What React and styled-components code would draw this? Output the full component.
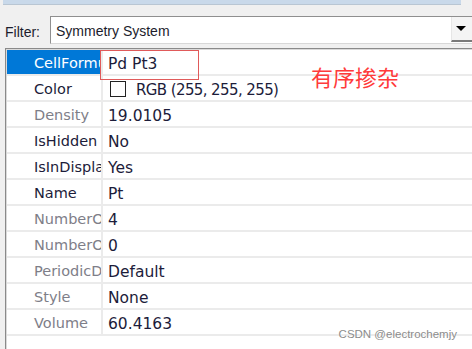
import React from 'react';
import styled, { createGlobalStyle } from 'styled-components';

const GlobalStyle = createGlobalStyle`
  html, body, #root {
    margin: 0;
    height: 100%;
  }
  body {
    background: #f0f0f0;
    overflow: hidden;
    font-family: "DejaVu Sans", Verdana, sans-serif;
  }
`;

const Window = styled.div`
  position: relative;
  display: flex;
  flex-direction: column;
  height: 100%;
`;

const TopStrip = styled.div`
  height: 4px;
  margin: 0 11px 0 3px;
  background: #c9d9ea;
  border-bottom: 1px solid #b9c6d3;
`;

const FilterRow = styled.div`
  display: flex;
  align-items: center;
  margin-top: 11px;
  padding-left: 5px;
  font-family: "Liberation Sans", Arial, sans-serif;
  font-size: 14px;
  color: #1c1c2c;
`;

const FilterLabel = styled.span`
  width: 45px;
  padding-top: 3px;
`;

const Combo = styled.div`
  flex: 1;
  display: flex;
  height: 26px;
  margin-right: -3px;
  background: #fff;
  border: 1px solid #8f8f8f;
  border-bottom-color: #d8d8d8;
`;

const ComboText = styled.span`
  flex: 1;
  padding: 2px 0 0 5px;
  line-height: 24px;
`;

const DropButton = styled.div`
  width: 21px;
  display: flex;
  align-items: center;
  justify-content: center;
  padding-left: 1px;
  background: #f4f4f4;
  border-left: 1px solid #e6e6e6;
  border-bottom: 2px solid #7a7a7a;
  margin-bottom: 1px;

  &::after {
    content: '';
    border-left: 5px solid transparent;
    border-right: 5px solid transparent;
    border-top: 5px solid #000;
    margin-right: 6px;
  }
`;

const Grid = styled.div`
  flex: 1;
  margin: 4px 0 0 5px;
  padding: 1px 0 0 1px;
  background: #fff;
  border-top: 1px solid #8a8a8a;
  border-left: 1px solid #8a8a8a;
  box-shadow: inset 1px 1px 0 #dadada;
`;

const Row = styled.div`
  display: flex;
  height: 24px;
  border-bottom: 2px solid #ebebeb;
`;

const NameCell = styled.div`
  width: 94px;
  padding: 2px 0 0 27px;
  box-sizing: border-box;
  font-size: 14.5px;
  line-height: 22px;
  white-space: nowrap;
  overflow: hidden;
  background: ${p => (p.$selected ? '#0078d7' : 'transparent')};
  color: ${p => (p.$selected ? '#fff' : p.$readonly ? '#7e7e88' : '#1c1c3a')};
`;

const ValueCell = styled.div`
  flex: 1;
  display: flex;
  align-items: center;
  gap: 10px;
  padding: 3px 0 0 5px;
  border-left: 2px solid #ebebeb;
  font-size: 15.5px;
  color: #1c1c3a;
  white-space: nowrap;
`;

const ColorText = styled.span`
  font-size: 15px;
  letter-spacing: -0.6px;
`;

const Swatch = styled.span`
  width: 14px;
  height: 14px;
  margin: 0 0 2px 2px;
  background: ${p => p.$color};
  border: 1px solid #222;
`;

const Highlight = styled.div`
  position: absolute;
  left: 100px;
  top: 50px;
  width: 97px;
  height: 28px;
  border: 1px solid #e05a5a;
`;

const Note = styled.span`
  position: absolute;
  left: 311px;
  top: 60px;
  font-family: "Noto Sans CJK SC", sans-serif;
  font-size: 22px;
  color: #ff3b3b;
`;

const Watermark = styled.span`
  position: absolute;
  right: 15px;
  bottom: 9px;
  font-family: "Liberation Sans", Arial, sans-serif;
  font-size: 11.5px;
  color: #8c8c8c;
  text-shadow: 0 0 2px #fff;
`;

const props = [
  { name: 'CellFormula', value: 'Pd Pt3', selected: true },
  { name: 'Color', value: 'RGB (255, 255, 255)', swatch: '#fff' },
  { name: 'Density', value: '19.0105', readonly: true },
  { name: 'IsHidden', value: 'No' },
  { name: 'IsInDisplay', value: 'Yes' },
  { name: 'Name', value: 'Pt' },
  { name: 'NumberOfAtoms', value: '4', readonly: true },
  { name: 'NumberOfBonds', value: '0', readonly: true },
  { name: 'PeriodicDisplayType', value: 'Default', readonly: true },
  { name: 'Style', value: 'None', readonly: true },
  { name: 'Volume', value: '60.4163', readonly: true },
];

export default function App() {
  return (
    <Window>
      <GlobalStyle />
      <TopStrip />
      <FilterRow>
        <FilterLabel>Filter:</FilterLabel>
        <Combo>
          <ComboText>Symmetry System</ComboText>
          <DropButton />
        </Combo>
      </FilterRow>
      <Grid>
        {props.map(p => (
          <Row key={p.name}>
            <NameCell $selected={p.selected} $readonly={p.readonly}>
              {p.name}
            </NameCell>
            <ValueCell>
              {p.swatch ? (
                <>
                  <Swatch $color={p.swatch} />
                  <ColorText>{p.value}</ColorText>
                </>
              ) : (
                p.value
              )}
            </ValueCell>
          </Row>
        ))}
      </Grid>
      <Highlight />
      <Note>有序掺杂</Note>
      <Watermark>CSDN @electrochemjy</Watermark>
    </Window>
  );
}
